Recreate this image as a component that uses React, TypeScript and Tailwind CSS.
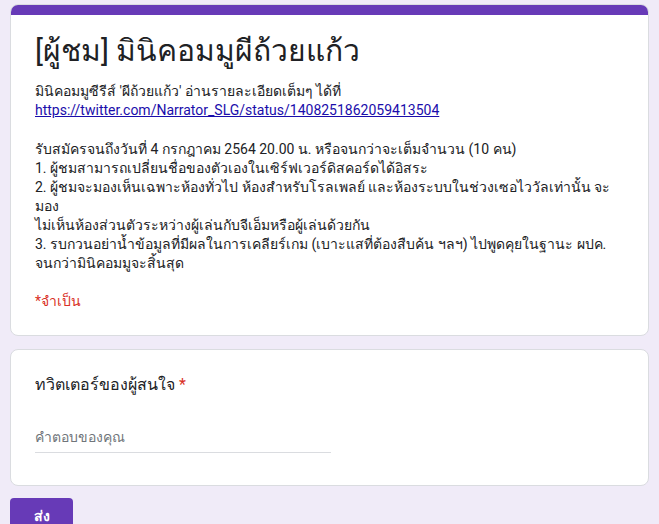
export default function App() {
  return (
    <div className="min-h-[524px] bg-[#f0ebf8] px-[10px] pt-[4px] pb-2" style={{ fontFamily: "Roboto, 'Noto Sans', 'DejaVu Sans', sans-serif" }}>
      <div className="rounded-lg bg-white border border-[#dadce0] overflow-hidden">
        <div className="h-[10px] bg-[#673ab7]" />
        <div className="px-6 pt-[18px] pb-[24px]">
          <h1 className="text-[30px] leading-[36px] text-[#202124] mb-[13px]">[ผู้ชม] มินิคอมมูผีถ้วยแก้ว</h1>
          <div className="text-[14px] leading-[19px] text-[#202124]">
            <div>มินิคอมมูซีรีส์ 'ผีถ้วยแก้ว' อ่านรายละเอียดเต็มๆ ได้ที่</div>
            <div><a className="text-[#1a0dab] underline">https://twitter.com/Narrator_SLG/status/1408251862059413504</a></div>
            <div className="h-[20px]" />
            <div>รับสมัครจนถึงวันที่ 4 กรกฎาคม 2564 20.00 น. หรือจนกว่าจะเต็มจำนวน (10 คน)</div>
            <div>1. ผู้ชมสามารถเปลี่ยนชื่อของตัวเองในเซิร์ฟเวอร์ดิสคอร์ดได้อิสระ</div>
            <div>2. ผู้ชมจะมองเห็นเฉพาะห้องทั่วไป ห้องสำหรับโรลเพลย์ และห้องระบบในช่วงเซอไววัลเท่านั้น จะมอง</div>
            <div>ไม่เห็นห้องส่วนตัวระหว่างผู้เล่นกับจีเอ็มหรือผู้เล่นด้วยกัน</div>
            <div>3. รบกวนอย่าน้ำข้อมูลที่มีผลในการเคลียร์เกม (เบาะแสที่ต้องสืบค้น ฯลฯ) ไปพูดคุยในฐานะ ผปค.</div>
            <div>จนกว่ามินิคอมมูจะสิ้นสุด</div>
          </div>
          <div className="mt-[18px] text-[14px] leading-[20px] text-[#d93025]">*จำเป็น</div>
        </div>
      </div>
      <div className="mt-[13px] rounded-lg bg-white border border-[#dadce0] px-6 pt-[23px] pb-[32px]">
        <div className="text-[16px] leading-[24px] text-[#202124]">ทวิตเตอร์ของผู้สนใจ <span className="text-[#d93025]">*</span></div>
        <div className="mt-[30px] w-[296px] border-b border-[#dadce0] pb-[5px] text-[14px] leading-[20px] text-[#70757a]">คำตอบของคุณ</div>
      </div>
      <button className="mt-[12px] h-[36px] w-[63px] rounded bg-[#673ab7] text-white text-[14px] font-bold">ส่ง</button>
    </div>
  );
}
